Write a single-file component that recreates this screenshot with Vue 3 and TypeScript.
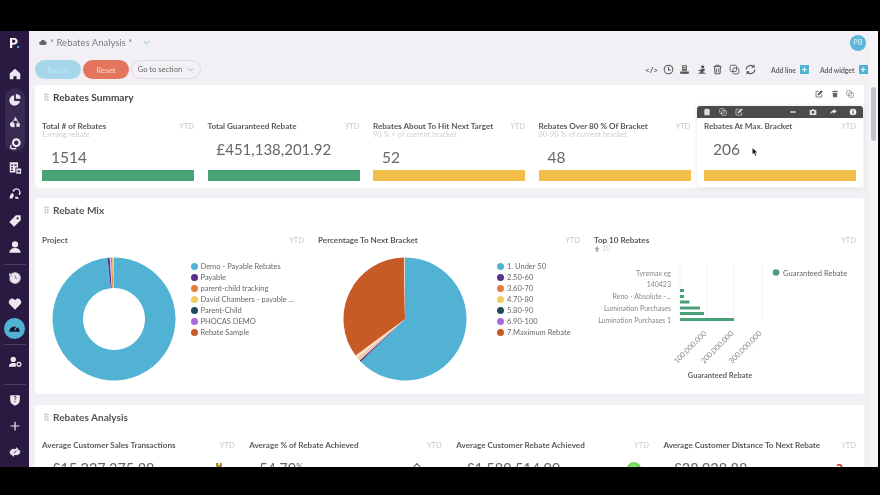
<script setup lang="ts">
function polar(cx: number, cy: number, r: number, deg: number): string {
  const a = ((deg - 90) * Math.PI) / 180
  return `${(cx + r * Math.cos(a)).toFixed(2)} ${(cy + r * Math.sin(a)).toFixed(2)}`
}
function slice(cx: number, cy: number, r: number, r0: number, from: number, to: number): string {
  const large = to - from > 180 ? 1 : 0
  if (r0 === 0) return `M${cx} ${cy}L${polar(cx, cy, r, from)}A${r} ${r} 0 ${large} 1 ${polar(cx, cy, r, to)}Z`
  return `M${polar(cx, cy, r, from)}A${r} ${r} 0 ${large} 1 ${polar(cx, cy, r, to)}L${polar(cx, cy, r0, to)}A${r0} ${r0} 0 ${large} 0 ${polar(cx, cy, r0, from)}Z`
}
const C = { blue: '#52b2d3', purple: '#5b2f8c', orange: '#e57d3a', yellow: '#f2cd62', navy: '#1f4a5e', violet: '#a66bd9', rust: '#c75a25' }
const donut = [
  { c: C.blue, a: 0, b: 354 }, { c: C.purple, a: 354, b: 356 }, { c: '#d8c8e8', a: 356, b: 357 },
  { c: C.orange, a: 357, b: 358.5 }, { c: C.yellow, a: 358.5, b: 360 },
].map((s) => ({ c: s.c, d: slice(62, 62, 61.5, 31, s.a, s.b) }))
const pie = [
  { c: C.blue, a: 0, b: 226 }, { c: C.purple, a: 226, b: 227.5 }, { c: '#f0c8a8', a: 227.5, b: 231 },
  { c: '#f8e4cc', a: 231, b: 233.5 }, { c: C.rust, a: 233.5, b: 359 }, { c: '#f0d8c4', a: 359, b: 360 },
].map((s) => ({ c: s.c, d: slice(62, 62, 61.5, 0, s.a, s.b) }))
const legend1 = [
  ['Demo - Payable Rebates', C.blue], ['Payable', C.purple], ['parent-child tracking', C.orange],
  ['David Chambers - payable ...', C.yellow], ['Parent-Child', C.navy], ['PHOCAS DEMO', C.violet], ['Rebate Sample', C.rust],
]
const legend2 = [
  ['1. Under 50', C.blue], ['2.50-60', C.purple], ['3.60-70', C.orange], ['4.70-80', C.yellow],
  ['5.80-90', C.navy], ['6.90-100', C.violet], ['7.Maximum Rebate', C.rust],
]
const kpis = [
  { t: 'Total # of Rebates', s: 'Earning rebate', v: '1514', g: true, long: false },
  { t: 'Total Guaranteed Rebate', s: '', v: '£451,138,201.92', g: true, long: true },
  { t: 'Rebates About To Hit Next Target', s: '90 % + of current bracket', v: '52', g: false, long: false },
  { t: 'Rebates Over 80 % Of Bracket', s: '80-90 % of current bracket', v: '48', g: false, long: false },
]
const bars = [
  { y: 290, w: 4 }, { y: 296, w: 4 }, { y: 301.5, w: 9.5 }, { y: 307.5, w: 20 }, { y: 313, w: 24 }, { y: 319, w: 54 },
].map((b) => ({ y: b.y - 264, w: b.w }))
const catLabels = [
  ['Tyremax eg', 10], ['140423', 21], ['Reno - Absolute -...', 33], ['Lumination Purchases', 45], ['Lumination Purchases 1', 57],
] as const
const ticks = [['100,000,000', 113], ['200,000,000', 140], ['300,000,000', 168]] as const
const analysis = [
  { t: 'Average Customer Sales Transactions', v: '£15,227,275.88', u: '' },
  { t: 'Average % of Rebate Achieved', v: '54.79', u: '%' },
  { t: 'Average Customer Rebate Achieved', v: '£1,589,514.99', u: '' },
  { t: 'Average Customer Distance To Next Rebate', v: '£28,928.88', u: '' },
]
</script>

<template>
  <div class="screen">
    <div class="frame">
      <aside class="side">
        <div class="logo">P<i>.</i></div>
        <span class="nav n-home"><svg viewBox="0 0 16 16"><path d="M8 2 2 7.500V14h4.200v-3.500h3.600V14H14V7.500z" /></svg></span>
        <div class="pill">
          <span class="nav"><svg viewBox="0 0 16 16"><path d="M7 2.500a6 6 0 1 0 6.500 6.500H7z" /><path d="M9 1v5.500h5.500A5.500 5.500 0 0 0 9 1z" /></svg></span>
          <span class="nav n2"><svg viewBox="0 0 16 16" fill="none"><path d="M8.500 2 11 6.500H6z" /><path d="M5 8a3 3 0 1 0 .5 6h2V9z M9.500 9.500h4v4h-4z" /><path d="M6 6.500 4 9M10.500 6.500l1.500 3" stroke="#f2eff6" stroke-width="1" /></svg></span>
          <span class="nav n2"><svg viewBox="0 0 16 16"><circle cx="9.500" cy="6.500" r="3.800" fill="none" stroke="#f2eff6" stroke-width="2.400" /><path d="M2 11.500c0-1 .5-2 1.500-3l1 1c-.6.700-.8 1.200-.8 2 0 .7.800 1.300 2 1.300 1.300 0 2.300-.2 3.300-.8l.8 1.300c-1.300.8-2.700 1-4.100 1-2 0-3.700-1-3.700-2.800z" /></svg></span>
        </div>
        <span class="nav n-a"><svg viewBox="0 0 16 16"><path d="M2 1.500h9.500v6H8.500V13H2zM3.500 4v1.500h2.200V4zm3.500 0v1.500h3V4zM3.500 7v1.500h2.200V7zM3.500 10v1.500h2.200V10z" fill-rule="evenodd" /><path d="M9.500 8.500H15V14.500H9.500zM11 10.500v2.300h2.500v-2.300z" fill-rule="evenodd" /></svg></span>
        <span class="nav n-b"><svg viewBox="0 0 16 16"><path d="M9.500 1.500a5 5 0 0 1 4 8L12 8a3 3 0 1 0-5-2.200L5 4.500a5 5 0 0 1 4.500-3z" /><path d="M5.500 6.500a3 3 0 0 0 1.500 2.700l-2 3.800H2v-2a6 6 0 0 1 3.500-4.500zM8 11h3l1.500 2.500H8.500z" /></svg></span>
        <span class="nav n-f"><svg viewBox="0 0 16 16"><path d="M9 1.500h5.500V7L7 14.500 1.500 9z" /><circle cx="11" cy="5" r="1.200" fill="#2a1a42" /></svg></span>
        <span class="nav n-b"><svg viewBox="0 0 16 16"><circle cx="8" cy="5" r="3.500" /><path d="M1.500 14.500C2 10.500 5 9 8 9s6 1.500 6.500 5.500z" /></svg></span>
        <hr class="rule r1" />
        <span class="nav n-c"><svg viewBox="0 0 16 16" fill="none" stroke="#cfc8d8" stroke-width="1.300"><path d="M2.800 5a6 6 0 1 1-.8 3M2 2.500V5.500h3M8 4.500V8l2.500 1.500" /></svg></span>
        <span class="nav n-b"><svg viewBox="0 0 16 16"><path d="M8 14.500 1.800 8.200a3.800 3.800 0 0 1 5.400-5.300l.8.800.8-.8a3.800 3.800 0 0 1 5.400 5.300z" /></svg></span>
        <span class="active"><svg viewBox="0 0 16 16"><path d="M1.500 12a6.500 6.500 0 1 1 13 0z" fill="#1a1330" /><path d="M8 10l3-4.500" stroke="#52b2d3" stroke-width="1.400" /></svg></span>
        <hr class="rule r2" />
        <span class="nav n-d"><svg viewBox="0 0 16 16"><circle cx="6" cy="5" r="3" /><path d="M1 13.500C1 10 3.500 9 6 9s3 .5 3 .5v4z" /><circle cx="12.500" cy="10.500" r="2.200" fill="none" stroke="#f2eff6" stroke-width="1.400" /></svg></span>
        <hr class="rule r3" />
        <span class="nav n-e"><svg viewBox="0 0 16 16"><path d="M2.500 2.500h11V8c0 3.500-2.500 5.500-5.500 6.500C5 13.500 2.500 11.500 2.500 8z" /><text x="8" y="10.500" class="shield">?</text></svg></span>
        <span class="nav n-b"><svg viewBox="0 0 16 16"><path d="M7.300 3h1.400v4.300H13v1.400H8.700V13H7.300V8.700H3V7.300h4.300z" /></svg></span>
        <span class="nav n-b"><svg viewBox="0 0 16 16" fill="none" stroke="#e8e4ee" stroke-width="1.100"><path d="M4 11C1.500 9.500 2.200 5 6 5h5M9.300 3l2.200 2-2.200 2M12 5.500c2.500 1.500 1.800 5.500-2 5.500H5M6.700 13 4.500 11l2.200-2" /></svg></span>
      </aside>

      <main class="main">
        <header class="top">
          <div class="crumb">
            <svg class="cloud" viewBox="0 0 16 12"><path d="M4 11a3.500 3.500 0 0 1-.5-7A4.500 4.500 0 0 1 12 3.500 3.800 3.800 0 0 1 12.500 11z" /></svg>
            <span>* Rebates Analysis *</span>
            <svg class="chev" viewBox="0 0 10 6"><path d="M1 1l4 4 4-4" /></svg>
          </div>
          <div class="avatar">PB</div>
        </header>

        <div class="tools">
          <button class="btn focus">Focus</button>
          <button class="btn reset">Reset</button>
          <button class="btn goto">Go to section <svg class="chev" viewBox="0 0 10 6"><path d="M1 1l4 4 4-4" /></svg></button>
          <div class="tool-icons">
            <span class="code">&lt;/&gt;</span>
            <svg viewBox="0 0 14 14" fill="none" stroke="#555" stroke-width="1.300"><circle cx="7" cy="7" r="5.500" /><path d="M7 3.500V7.500h3" /></svg>
            <svg viewBox="0 0 14 14" fill="#555"><path d="M4 1.500h6v7H4zM5 3v1h4V3zM5 5v1h4V5z" fill-rule="evenodd" /><path d="M1.500 9.500h11V12.500h-11z" /></svg>
            <svg viewBox="0 0 14 14" fill="#555"><circle cx="8.500" cy="3.500" r="2" /><path d="M6 6h5v3H9.500v2H12v1.500H3V11h2.500V9H3V7.500h3z" /></svg>
            <svg viewBox="0 0 14 14" fill="none" stroke="#555" stroke-width="1.200"><path d="M2 3.200h10M5 3V1.500h4V3M3.200 3.500 3.700 12.500h6.600l.5-9" /><path d="M5.500 5.500V11M8.500 5.500V11" /></svg>
            <svg viewBox="0 0 14 14" fill="none" stroke="#555" stroke-width="1.100"><rect x="1.500" y="1.500" width="8" height="8" rx="1.500" /><rect x="5" y="5" width="7.500" height="7.500" rx="1.500" /></svg>
            <svg viewBox="0 0 14 14" fill="none" stroke="#555" stroke-width="1.400"><path d="M1.500 7A5.500 5.500 0 0 1 11 3.500M12.500 7A5.500 5.500 0 0 1 3 10.500" /><path d="M11.500 1v3h-3M2.500 13v-3h3" /></svg>
          </div>
          <span class="add first">Add line <b>+</b></span>
          <span class="add">Add widget <b>+</b></span>
        </div>

        <section class="card summary">
          <div class="head">
            <span class="grip"></span><h2>Rebates Summary</h2>
            <div class="head-icons">
              <svg viewBox="0 0 12 12" fill="none" stroke="#555" stroke-width="1.100"><path d="M10 6.500V10.500H1.500V2H6" /><path d="M4.500 7.500 5 5.500 9.500 1 11 2.500 6.500 7z" fill="#555" /></svg>
              <svg viewBox="0 0 12 12" fill="#666"><path d="M4 1h4v1h2.500v1h-9V2H4zM2.500 4h7L9 11H3z" /></svg>
              <svg viewBox="0 0 12 12" fill="none" stroke="#777"><rect x="1" y="1" width="7" height="7" rx="1.500" /><rect x="4" y="4" width="7" height="7" rx="1.500" /></svg>
            </div>
          </div>
          <div class="kpi-row">
            <div v-for="k in kpis" :key="k.t" class="kpi">
              <div class="kpi-head"><span class="kpi-t">{{ k.t }}</span><span class="ytd">YTD</span></div>
              <div v-if="k.s" class="kpi-s">{{ k.s }}</div>
              <div class="kpi-v" :class="{ long: k.long }">{{ k.v }}</div>
              <div class="bar" :class="k.g ? 'green' : 'amber'"></div>
            </div>
            <div class="kpi hovered">
              <div class="hover-shell"></div>
              <div class="hover-bar">
                <svg viewBox="0 0 12 12" fill="#ddd"><path d="M4 1h4v1h2v9H2V2h2z" /></svg>
                <svg viewBox="0 0 12 12" fill="none" stroke="#ddd"><rect x="1" y="1" width="7" height="7" rx="1.500" /><rect x="4" y="4" width="7" height="7" rx="1.500" /></svg>
                <svg viewBox="0 0 12 12" fill="none" stroke="#ddd"><path d="M10 6.500V10.500H1.500V2H6" /><path d="M4.500 7.500 5 5.500 9.500 1 11 2.500 6.500 7z" fill="#ddd" /></svg>
                <span class="sp"></span>
                <svg viewBox="0 0 12 12" fill="#eee"><path d="M2 5h8v2H2z" /></svg>
                <svg viewBox="0 0 12 12" fill="#ddd"><path d="M1 3h3l1-1.500h2L8 3h3v7.500H1zM6 4.500a2 2 0 1 0 0 4 2 2 0 0 0 0-4z" fill-rule="evenodd" /></svg>
                <svg viewBox="0 0 12 12" fill="#eee"><path d="M7 1.500 11.500 5 7 8.500V6.500C4.500 6.500 3 7.500 1.500 10 2 6.500 4 4 7 3.500z" /></svg>
                <svg viewBox="0 0 12 12"><circle cx="6" cy="6" r="5" fill="#f4f4f4" /><path d="M5.200 5h1.600v4.500H5.200zM5.200 2.500h1.600V4H5.200z" fill="#4a4a4a" /></svg>
              </div>
              <div class="kpi-head"><span class="kpi-t">Rebates At Max. Bracket</span><span class="ytd">YTD</span></div>
              <div class="kpi-v">206</div>
              <div class="bar amber"></div>
              <svg class="cursor" viewBox="0 0 8 12"><path d="M.5.500V9l2.200-1.800L4.300 11l1.600-.7-1.600-3.600 3-.2z" fill="#111" stroke="#fff" stroke-width=".4" /></svg>
            </div>
          </div>
        </section>

        <section class="card mix">
          <div class="head"><span class="grip"></span><h2>Rebate Mix</h2></div>
          <div class="mix-row">
            <div class="chart c1">
              <div class="kpi-head"><span class="kpi-t">Project</span><span class="ytd">YTD</span></div>
              <div class="chart-body">
                <svg class="pie" viewBox="0 0 124 124"><path v-for="s in donut" :key="s.c + s.d" :d="s.d" :fill="s.c" /></svg>
                <ul class="legend"><li v-for="l in legend1" :key="l[0]"><i :style="{ background: l[1] }"></i>{{ l[0] }}</li></ul>
              </div>
            </div>
            <div class="chart c2">
              <div class="kpi-head"><span class="kpi-t">Percentage To Next Bracket</span><span class="ytd">YTD</span></div>
              <div class="chart-body">
                <svg class="pie" viewBox="0 0 124 124"><path v-for="s in pie" :key="s.c + s.d" :d="s.d" :fill="s.c" /></svg>
                <ul class="legend"><li v-for="l in legend2" :key="l[0]"><i :style="{ background: l[1] }"></i>{{ l[0] }}</li></ul>
              </div>
            </div>
            <div class="chart c3">
              <div class="kpi-head"><span class="kpi-t">Top 10 Rebates</span><span class="ytd">YTD</span></div>
              <div class="kpi-s top10"><svg viewBox="0 0 8 8"><path d="M4 .5 7.500 4H5.500v3.500h-3V4H.5z" fill="#aaa" /></svg> 10</div>
              <svg class="barchart" viewBox="0 0 262 125" width="262" height="125">
                <line v-for="x in [86, 113, 140, 168]" :key="x" :x1="x" :x2="x" y1="1" y2="58" stroke="#eee" stroke-width=".7" />
                <text v-for="c in catLabels" :key="c[0]" x="77" :y="c[1] + 3" text-anchor="end" class="cat">{{ c[0] }}</text>
                <rect v-for="b in bars" :key="b.y" x="86" :y="b.y" :width="b.w" height="3" fill="#4aa078" />
                <text v-for="t in ticks" :key="t[0]" class="tick" text-anchor="end" :transform="`translate(${t[1]} 71) rotate(-45)`">{{ t[0] }}</text>
                <text x="126" y="115" text-anchor="middle" class="axis">Guaranteed Rebate</text>
                <circle cx="182" cy="9.500" r="3.300" fill="#4aa078" />
                <text x="189" y="12.500" class="leg">Guaranteed Rebate</text>
              </svg>
            </div>
          </div>
        </section>

        <section class="card analysis">
          <div class="head"><span class="grip"></span><h2>Rebates Analysis</h2></div>
          <div class="an-row">
            <div v-for="(a, i) in analysis" :key="a.t" class="an">
              <div class="kpi-head"><span class="kpi-t">{{ a.t }}</span><span class="ytd">YTD</span></div>
              <div class="an-v">
                <span>{{ a.v }}<small v-if="a.u">{{ a.u }}</small></span>
                <svg v-if="i === 0" class="m0" viewBox="0 0 12 12"><path d="M3 0h2.500v2H7V0h2v3l-1 1.500a4 4 0 1 1-4 0L3 3z" fill="#b08a3a" /></svg>
                <svg v-else-if="i === 1" class="m1" viewBox="0 0 12 12" fill="none" stroke="#666" stroke-width="1.100"><path d="M6 .5 11 6H8v6H4V6H1z" /></svg>
                <span v-else-if="i === 2" class="ball"></span>
                <span v-else class="q">?</span>
              </div>
            </div>
          </div>
        </section>
      </main>
      <div class="track"><div class="thumb"></div></div>
    </div>
  </div>
</template>

<style>
html, body { margin: 0; background: #000; }
</style>

<style scoped>
* { box-sizing: border-box; }
.screen { width: 880px; height: 495px; background: #000; padding-top: 31px; overflow: hidden; font-family: Lato, "Liberation Sans", sans-serif; }
.frame { position: relative; width: 878px; height: 436px; display: flex; overflow: hidden; background: #f2f0f4; filter: blur(.45px); }
.side { width: 29px; flex: none; background: #2a1a42; display: flex; flex-direction: column; align-items: center; }
.logo { height: 22px; margin-top: 1px; font: 900 14px/22px Lato, sans-serif; color: #fff; }
.logo i { color: #52b2d3; font-style: normal; }
.nav { display: flex; height: 14px; width: 14px; flex: none; }
.nav svg { width: 14px; height: 14px; fill: #ece8f0; }
.n-home { margin-top: 13px; }
.pill { width: 20px; height: 64px; margin-top: 7px; padding-top: 5px; background: #382a52; border-radius: 10px; display: flex; flex-direction: column; align-items: center; }
.n2 { margin-top: 8px; }
.n-a { margin-top: 9px; }
.n-b { margin-top: 12px; }
.n-f { margin-top: 13px; }
.n-c { margin-top: 6px; }
.n-d { margin-top: 10px; }
.n-e { margin-top: 8px; }
.rule { width: 22px; border: 0; height: 1px; background: #4b3e64; margin: 0; flex: none; }
.r1 { margin-top: 10px; }
.r2 { margin-top: 5px; }
.r3 { margin-top: 15px; }
.shield { font: 700 8px Lato, sans-serif; fill: #2a1a42; text-anchor: middle; }
.active { width: 21px; height: 21px; border-radius: 50%; background: #52b2d3; margin-top: 7px; flex: none; display: flex; align-items: center; justify-content: center; }
.active svg { width: 13px; height: 13px; }
.main { flex: 1; min-width: 0; padding: 0 14px 0 6px; display: flex; flex-direction: column; }
.top { height: 23px; flex: none; display: flex; align-items: center; justify-content: space-between; padding-left: 4px; }
.crumb { display: flex; align-items: center; gap: 3px; color: #7b7b80; font-size: 9.500px; }
.cloud { width: 8px; height: 7px; fill: #666; }
.chev { width: 7px; height: 5px; fill: none; stroke: #7fb6cc; stroke-width: 1.300; }
.crumb .chev { margin-left: 8px; }
.avatar { width: 16px; height: 16px; margin-right: -2px; border-radius: 50%; background: #5db6d8; color: #d8f0f8; font-size: 7.500px; display: flex; align-items: center; justify-content: center; }
.tools { height: 31px; flex: none; display: flex; align-items: center; gap: 2px; margin-right: -3.500px; }
.btn { height: 19px; width: 46px; border: 0; border-radius: 10px; font: 8px Lato, sans-serif; color: #fff; padding: 0; }
.focus { background: #a6d6ea; color: #c4e6f2; }
.reset { background: #e5745c; color: #f8d8d0; }
.goto { width: 70px; background: #f2f0f4; border: 1px solid #dcdade; color: #666; font-size: 7.500px; display: flex; align-items: center; justify-content: center; gap: 5px; }
.tool-icons { margin-left: auto; display: flex; align-items: center; gap: 5.500px; }
.tool-icons svg { width: 11px; height: 11px; }
.code { font: 700 8px Lato, sans-serif; color: #555; width: 12px; }
.add { font-size: 6.800px; font-weight: 700; color: #666; display: flex; align-items: center; gap: 4px; margin-left: 9px; }
.add.first { margin-left: 13px; }
.add b { width: 9px; height: 9px; background: #52b2d3; color: #fff; font: 700 9px/9px Lato, sans-serif; text-align: center; }
.card { background: #fff; border-radius: 3px; flex: none; padding: 0 8px 0 7px; }
.head { height: 23px; display: flex; align-items: center; padding-left: 2px; }
.grip { width: 5px; height: 8px; margin-right: 4px; background-image: radial-gradient(#c4c4c4 .8px, transparent 1px); background-size: 2.500px 2.700px; }
h2 { margin: 0; font-size: 10.100px; font-weight: 700; color: #444; }
.mix h2, .analysis h2 { color: #555; }
.head-icons { margin-left: auto; margin-right: 2px; margin-bottom: 5px; display: flex; gap: 7.500px; }
.head-icons svg { width: 8px; height: 8px; }
.summary { height: 103px; }
.kpi-row { display: grid; grid-template-columns: repeat(5, 1fr); column-gap: 13.500px; margin-top: 13px; height: 60px; }
.kpi { position: relative; display: flex; flex-direction: column; min-width: 0; }
.kpi-head { display: flex; justify-content: space-between; align-items: center; height: 10px; }
.kpi-t { font-size: 8.100px; font-weight: 700; color: #5a5a5e; white-space: nowrap; }
.ytd { font-size: 7.500px; color: #c8c8cc; }
.kpi-s { font-size: 7.500px; line-height: 8px; height: 8px; color: #d0d0d4; white-space: nowrap; }
.kpi-v { margin-top: 8px; padding-left: 9px; font-size: 15.500px; line-height: 20px; color: #666; }
.kpi-v.long { font-size: 15px; }
.bar { margin-top: auto; height: 11px; }
.green { background: #47a373; }
.amber { background: #f3bf4a; }
.hovered { z-index: 1; }
.hover-shell { position: absolute; left: -7px; right: -7px; top: -15px; bottom: -6px; background: #fff; border-radius: 3px; box-shadow: 0 0 4px rgba(0, 0, 0, .12); }
.hover-bar { position: absolute; left: -7px; right: -7px; top: -15px; height: 12px; background: #4b4b4d; border-radius: 3px 3px 0 0; display: flex; align-items: center; padding: 0 6px; gap: 8px; }
.hover-bar svg { width: 8px; height: 8px; flex: none; }
.hover-bar .sp { flex: 1; }
.hover-bar svg:nth-last-child(-n+4) { margin-left: 4px; }
.hovered > .kpi-head, .hovered > .kpi-v, .hovered > .bar { position: relative; }
.cursor { position: absolute; left: 48px; top: 26px; width: 6px; height: 10px; }
.mix { height: 196px; margin-top: 10px; }
.mix-row { display: flex; margin-top: 14px; }
.chart { flex: none; }
.c1, .c2 { width: 262px; margin-right: 14px; }
.c3 { width: 262px; }
.chart-body { display: flex; align-items: flex-start; margin-top: 12px; }
.pie { width: 124px; height: 124px; margin-left: 9.500px; flex: none; }
.c2 .pie { margin-left: 25px; }
.legend { list-style: none; margin: 3.500px 0 0 15px; padding: 0; font-size: 7.500px; color: #666; }
.c2 .legend { margin-left: 30px; }
.legend li { display: flex; align-items: center; height: 11px; white-space: nowrap; }
.legend i { width: 7px; height: 7px; border-radius: 50%; margin-right: 3px; flex: none; }
.top10 { display: flex; align-items: center; gap: 2px; }
.top10 svg { width: 6px; height: 6px; }
.barchart { display: block; margin-top: 10px; overflow: visible; }
.cat { font: 7px Lato, sans-serif; fill: #888; }
.tick { font: 7.500px Lato, sans-serif; fill: #888; }
.axis { font: 700 7.500px Lato, sans-serif; fill: #666; }
.leg { font: 7.600px Lato, sans-serif; fill: #666; }
.analysis { height: 100px; margin-top: 11px; }
.an-row { display: grid; grid-template-columns: repeat(4, 1fr); column-gap: 14.500px; margin-top: 12px; }
.an { min-width: 0; }
.an-v { display: flex; justify-content: space-between; align-items: center; padding: 0 0 0 10px; margin-top: 9px; font-size: 14.500px; line-height: 20px; color: #666; height: 20px; }
.an-v small { font-size: 8px; line-height: 0; position: relative; top: -5px; }
.an-v svg { width: 12px; height: 12px; }
.m0 { margin-right: 10px; }
.m1 { margin-right: 19px; }
.ball { width: 14px; height: 14px; border-radius: 50%; margin-right: 8px; background: radial-gradient(circle at 50% 30%, #8fe66d, #3fae2c); }
.q { color: #c8322c; font-weight: 700; font-size: 15px; margin-right: 13px; }
.track { width: 9px; flex: none; background: #f6f5f7; padding: 56px 2px 0 2px; margin-left: -9px; position: relative; }
.thumb { width: 5px; height: 54px; background: #c4c4c8; border-radius: 3px; }
</style>
